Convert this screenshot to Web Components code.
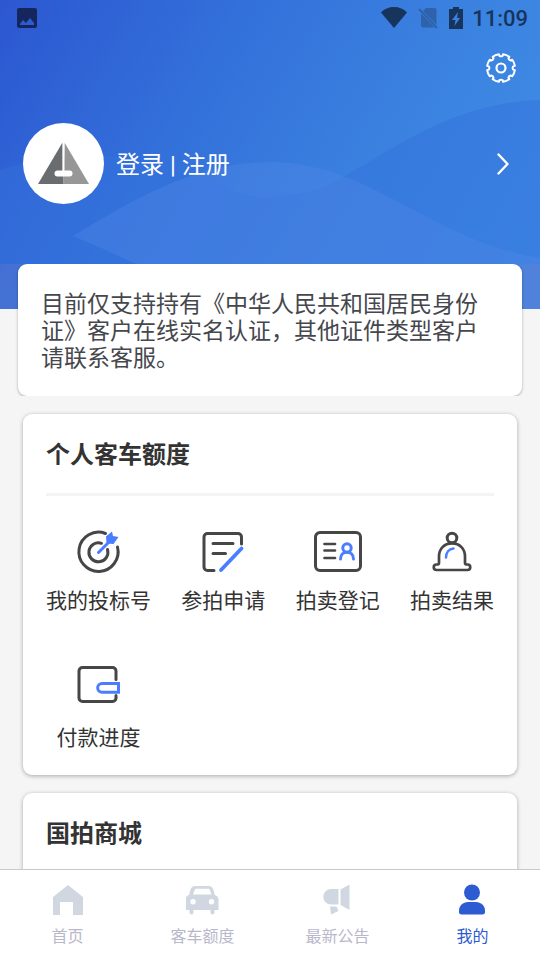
<!DOCTYPE html>
<html lang="zh-CN">
<head>
<meta charset="utf-8">
<meta name="viewport" content="width=device-width, initial-scale=1">
<title>我的</title>
<style>
html, body { margin: 0; height: 100%; background: #f5f5f5; }
body { font-family: Roboto, "Noto Sans CJK SC", sans-serif; color: #333; }
</style>
</head>
<body>
<mine-page></mine-page>

<script>
const define = (name, html, setup) => {
  const template = document.createElement('template');
  template.innerHTML = html;
  customElements.define(name, class extends HTMLElement {
    static observedAttributes = ['name', 'icon', 'heading'];
    constructor() {
      super();
      this.attachShadow({ mode: 'open' }).append(template.content.cloneNode(true));
    }
    connectedCallback() { if (setup) setup(this, this.shadowRoot); }
    attributeChangedCallback() { if (setup && this.isConnected) setup(this, this.shadowRoot); }
  });
};

// Eight-lobed cog outline: outer arcs joined by small rounded notches.
const cog = () => {
  const teeth = 8, pt = (r, a) => `${(15 + r * Math.cos(a)).toFixed(2)} ${(15 + r * Math.sin(a)).toFixed(2)}`;
  let d = '';
  for (let i = 0; i < teeth; i++) {
    const a = (i + 0.5) * 2 * Math.PI / teeth;
    const n = a + Math.PI / teeth;
    d += `${i ? 'L' : 'M'}${pt(14, a - 0.24)}A14 14 0 0 1 ${pt(14, a + 0.24)}`;
    d += `L${pt(12.2, n - 0.13)}Q${pt(11.2, n)} ${pt(12.2, n + 0.13)}`;
  }
  return d + 'Z';
};

const line = (colour, width) => `fill="none" stroke="${colour}" stroke-width="${width}" stroke-linecap="round" stroke-linejoin="round"`;
const dark = line('#464646', 3), darkThin = line('#464646', 2.7);
const blue = line('#4a7dff', 3), blueThin = line('#4a7dff', 2.5);
const icons = {
  picture: ['0 0 20 20', '<path fill="#15265c" fill-rule="evenodd" d="M2 0h16a2 2 0 0 1 2 2v16a2 2 0 0 1-2 2H2a2 2 0 0 1-2-2V2a2 2 0 0 1 2-2zM3 17h14v-2l-4-5-4 5-3-3-3 4z"/>'],
  wifi: ['0 0 26 22', '<path fill="#17345c" d="M13 21 0 5.500Q5 0 13 0T26 5.500z"/>'],
  nosim: ['0 0 20 22', '<path fill="#2e62ab" d="M8 1h8.500a2 2 0 0 1 2 2v15L5 4zM3 6.500l13.500 14H5a2 2 0 0 1-2-2z"/><path stroke="#2e62ab" stroke-width="2" d="M1 2 19 21"/>'],
  battery: ['0 0 14 22', '<path fill="#17345c" fill-rule="evenodd" d="M4 0h6v2h4v20H0V2h4zM9 5 3 13h3.500L5.500 19l5.500-8H8z"/>'],
  cog: ['0 0 30 30', `<path ${line('#fff', 2)} d="${cog()}"/><circle cx="15" cy="15" r="4.500" ${line('#fff', 2.2)}/>`],
  logo: ['0 0 81 81', '<circle cx="40.500" cy="40.500" r="40.500" fill="#fff"/><path fill="#6a6d6f" d="M39.500 19.500V61H15z"/><path fill="#979797" d="M41.500 19.500 66 61H40.500z"/><path fill="#6a6d6f" d="M39 50h1.500v11H39z"/><path fill="#fff" d="M39.700 19h1.800v32H39.700z"/><rect x="31.500" y="47.500" width="18" height="6" rx="3" fill="#fff"/>'],
  chevron: ['0 0 12 22', `<path ${line('#fff', 2.4)} d="m1.500 1.500 9 9.500-9 9.500"/>`],
  target: ['0 0 48 48', `<path ${dark} d="M30.500 5.500A19.600 19.600 0 1 0 42.500 19"/><path ${dark} d="M26.500 15.300A9.500 9.500 0 1 0 32.500 21.500"/><path ${blue} d="m23.500 24.500 11-11"/><path fill="#4a7dff" d="m31.500 15.500-.5-7L37 3.500l1 4.500 5.500 1L38.500 16z"/>`],
  form: ['0 0 48 48', `<path ${dark} d="M15 42.500H8.500A3.500 3.500 0 0 1 5 39V9a3.500 3.500 0 0 1 3.500-3.500H39A3.500 3.500 0 0 1 42.500 9V16M14 15.500h20M14 25.500h12.500"/><path ${line('#4a7dff', 3.8)} d="m22 42 20.500-21.500"/>`],
  idcard: ['0 0 48 48', `<rect x="1.500" y="4.500" width="45" height="38" rx="4.500" ${dark}/><path ${darkThin} d="M10.500 16H21M10.500 22.500H21M10.500 30H21"/><circle cx="33" cy="20" r="4.200" ${blue}/><path ${blue} d="M26.500 31c0-9 13-9 13 0"/>`],
  bell: ['0 0 48 48', `<circle cx="24" cy="10" r="4.800" ${dark}/><path ${darkThin} d="M11 35V28.500C11 21 16 15.300 24 15.300S37 21 37 28.500V35c0 1 1 1.500 2.500 1.500a2.500 2.500 0 0 1 0 5.500H8.500a2.500 2.500 0 0 1 0-5.500C10 36.500 11 36 11 35z"/><path ${blueThin} d="M18 29.500c0-5 3-8.500 7.500-9"/>`],
  wallet: ['0 0 48 48', `<path ${dark} d="M41 14.500V6A3.500 3.500 0 0 0 37.500 2.500H7.500A3.500 3.500 0 0 0 4 6v27A3.500 3.500 0 0 0 7.500 36.500h30A3.500 3.500 0 0 0 41 33V30.500"/><path fill="none" stroke="#4a7dff" stroke-width="3" d="M43.500 18.500H27a4.300 4.300 0 0 0 0 8.700H43.500z"/>`],
  home: ['0 0 34 34', '<path fill="#d1d7e1" d="M17 2 32 14v18H22V19H9v13H2V14z"/>'],
  car: ['0 0 34 34', '<path fill="#d1d7e1" fill-rule="evenodd" d="M9.500 3h13c3 0 4.500 2 5 4l1.300 5C31.500 13 32.500 14.500 32.500 17v10h-4v2.500a2 2 0 0 1-4 0V27h-17v2.500a2 2 0 0 1-4 0V27h-4V17c0-2.500 1-4 3.500-5l1.300-5c.5-2 2-4 5.200-4zM7 11.500h18.500L24 7.500c-.5-1.300-1-1.700-2-1.700H10.500c-1 0-1.600.4-2 1.700zM7 16a2.700 2.700 0 1 0 0 5.400A2.700 2.700 0 0 0 7 16zm18.500 0a2.700 2.700 0 1 0 0 5.400 2.700 2.700 0 0 0 0-5.400z"/>'],
  horn: ['0 0 34 34', '<path fill="#d1d7e1" d="M17.500 6v15.500H10a7.750 7.750 0 0 1 0-15.500zM19.500 6.500 28.500 1.500V27l-9-5zM9 23.500h6.500l2 4.500-7.500 3.500z"/>'],
  user: ['0 0 34 34', '<g fill="#2d5bd2"><circle cx="16" cy="9.500" r="8"/><path d="M12 19h8c5 0 9 4 9 8.500v1.500c0 1.600-.8 2.500-2.500 2.500H5.500C3.800 31.500 3 30.600 3 29v-1.500C3 23 7 19 12 19z"/></g>']
};

define('app-icon', `
<style>
:host { display: block; flex: none; width: var(--w, 48px); height: var(--h, var(--w, 48px)); }
svg { display: block; width: 100%; height: 100%; }
</style>
<svg aria-hidden="true"></svg>`, (host, root) => {
  const icon = icons[host.getAttribute('name')];
  if (!icon) return;
  const svg = root.querySelector('svg');
  svg.setAttribute('viewBox', icon[0]);
  svg.innerHTML = icon[1];
});

define('status-bar', `
<style>
:host { display: flex; align-items: center; height: 36px; padding: 0 12px 0 17px; color: #17345c; }
time { font-weight: 500; font-size: 22px; line-height: 36px; padding-top: 2px; margin-left: 9px; }
.gap { flex: 1; }
.end { display: flex; align-items: center; gap: 11px; padding-bottom: 1px; }
</style>
<app-icon name="picture" style="--w:20px"></app-icon>
<span class="gap"></span>
<div class="end">
<app-icon name="wifi" style="--w:26px;--h:22px"></app-icon>
<app-icon name="nosim" style="--w:20px;--h:22px"></app-icon>
<app-icon name="battery" style="--w:14px;--h:22px"></app-icon>
</div>
<time><slot></slot></time>`);

define('profile-header', `
<style>
:host { display: grid; color: #fff; background: linear-gradient(120deg, #2c57d1 0%, #3370da 34%, #3b82e0 66%, #3f8fe7 100%); }
.waves, .body { grid-area: 1 / 1; }
.waves { width: 100%; height: 100%; display: block; min-height: 0; }
.body { display: flex; flex-direction: column; padding-bottom: 105px; }
.tools { display: flex; justify-content: flex-end; padding: 17px 24px 0; }
button { all: unset; display: block; cursor: pointer; }
.login { display: flex; align-items: center; gap: 12px; padding: 0 31px 0 23px; margin-top: 40px; color: inherit; text-decoration: none; font-size: 24px; line-height: 36px; }
.login span { flex: 1; padding-top: 3px; }
</style>
<svg class="waves" viewBox="0 0 540 309" preserveAspectRatio="none" aria-hidden="true">
<path fill="#3372dc" fill-opacity=".5" d="M0 170C35 157 70 154 105 155.500C150 158 195 182 250 196C285 200 320 192 345 176C400 145 455 103 540 100V309H0z"/>
<path fill="#5088e6" fill-opacity=".4" d="M73 236C140 195 200 162 270 162C370 162 430 240 540 258V309H240C190 290 130 260 73 236z"/>
<path fill="#8d84bc" fill-opacity=".2" d="M0 264H540V309H0z"/>
</svg>
<div class="body">
<status-bar>11:09</status-bar>
<div class="tools"><button aria-label="设置"><app-icon name="cog" style="--w:30px"></app-icon></button></div>
<a class="login" href="#login"><app-icon name="logo" style="--w:81px"></app-icon><span><slot></slot></span><app-icon name="chevron" style="--w:12px;--h:22px"></app-icon></a>
</div>`);

define('notice-card', `
<style>
:host { display: block; position: relative; margin: -45px 18px 0; padding: 27px 23px 24px; border-radius: 9px; background: #fff; box-shadow: 0 1px 3px rgba(0,0,0,.3); clip-path: inset(0 -4px 0 -4px); color: #45474d; font-size: 23px; line-height: 27px; }
p { margin: 0; }
</style>
<p><slot></slot></p>`);

define('section-card', `
<style>
:host { display: block; margin: 18px 23px 0; padding: 23px 23px 21px; border-radius: 9px; background: #fff; box-shadow: 0 1px 4px rgba(0,0,0,.32); }
h2 { margin: 0; font-size: 24px; line-height: 36px; font-weight: 700; color: #333; }
hr { border: 0; height: 3px; margin: 20px 0 32px; background: #f4f4f4; }
.items { display: grid; grid-template-columns: repeat(4, auto); justify-content: space-between; row-gap: 48px; }
</style>
<h2></h2><hr><div class="items"><slot></slot></div>`, (host, root) => {
  root.querySelector('h2').textContent = host.getAttribute('heading');
});

define('menu-item', `
<style>
:host { display: block; }
a { display: flex; flex-direction: column; align-items: center; gap: 9px; color: #333; text-decoration: none; font-size: 21px; line-height: 32px; white-space: nowrap; }
</style>
<a href="#"><app-icon></app-icon><span><slot></slot></span></a>`, (host, root) => {
  root.querySelector('app-icon').setAttribute('name', host.getAttribute('icon'));
});

define('tab-item', `
<style>
:host { flex: 1; }
a { display: flex; flex-direction: column; align-items: center; gap: 7px; padding: 13px 0 10px; color: #b9b7cb; text-decoration: none; font-size: 16px; line-height: 26px; }
:host([active]) a { color: #2d5bd2; }
</style>
<a href="#"><app-icon style="--w:34px"></app-icon><span><slot></slot></span></a>`, (host, root) => {
  root.querySelector('app-icon').setAttribute('name', host.getAttribute('icon'));
  if (host.hasAttribute('active')) root.querySelector('a').setAttribute('aria-current', 'page');
});

define('tab-bar', `
<style>
:host { display: block; flex: none; border-top: 1px solid #c9c9c9; background: #fff; }
nav { display: flex; }
</style>
<nav><slot></slot></nav>`);

define('mine-page', `
<style>
:host { display: flex; flex-direction: column; height: 100vh; }
main { flex: 1; min-height: 0; overflow-y: auto; scrollbar-width: none; }
</style>
<main>
<profile-header>登录 | 注册</profile-header>
<notice-card>目前仅支持持有《中华人民共和国居民身份证》客户在线实名认证，其他证件类型客户请联系客服。</notice-card>
<section-card heading="个人客车额度">
<menu-item icon="target">我的投标号</menu-item>
<menu-item icon="form">参拍申请</menu-item>
<menu-item icon="idcard">拍卖登记</menu-item>
<menu-item icon="bell">拍卖结果</menu-item>
<menu-item icon="wallet">付款进度</menu-item>
</section-card>
<section-card heading="国拍商城"></section-card>
</main>
<tab-bar>
<tab-item icon="home">首页</tab-item>
<tab-item icon="car">客车额度</tab-item>
<tab-item icon="horn">最新公告</tab-item>
<tab-item icon="user" active>我的</tab-item>
</tab-bar>`);
</script>
</body>
</html>
